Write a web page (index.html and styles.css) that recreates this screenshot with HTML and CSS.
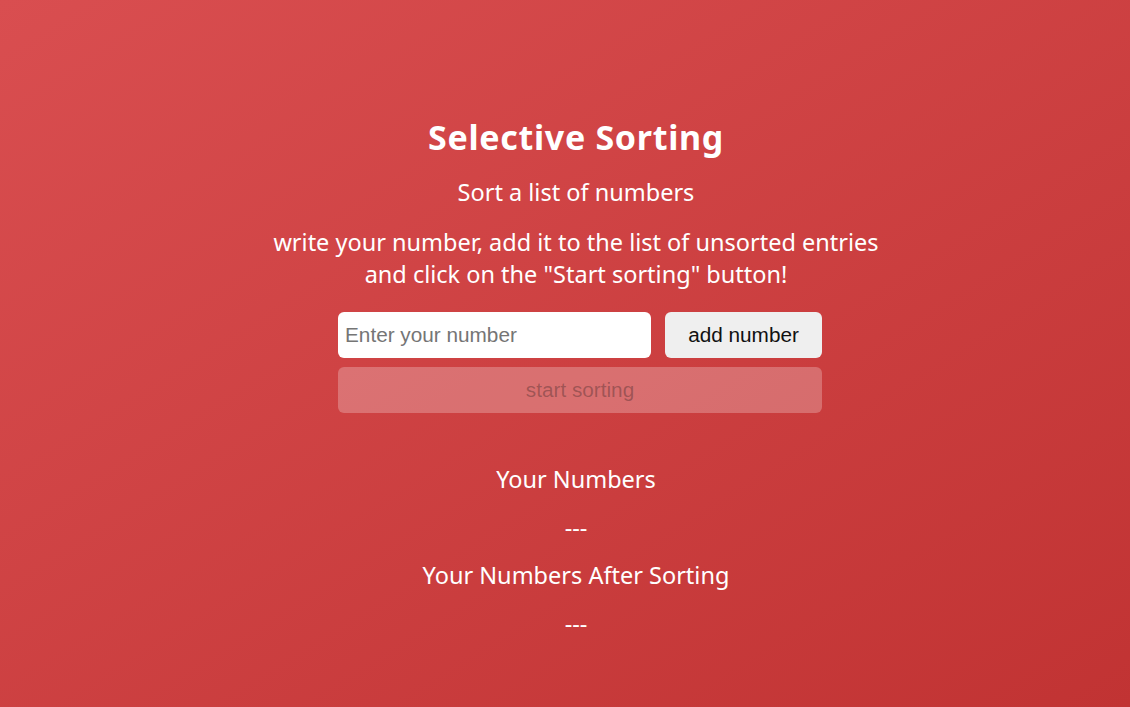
FILE: index.html
```html
<!DOCTYPE html>
<html lang="en">
<head>
<meta charset="utf-8">
<title>Selective Sorting</title>
<link rel="stylesheet" href="styles.css">
</head>
<body>
<main class="app">
  <h1 class="title">Selective Sorting</h1>
  <p class="subtitle">Sort a list of numbers</p>
  <p class="hint">write your number, add it to the list of unsorted entries<br>and click on the "Start sorting" button!</p>
  <div class="controls">
    <div class="row">
      <input class="num-input" type="text" placeholder="Enter your number">
      <button class="btn add-btn">add number</button>
    </div>
    <button class="btn start-btn" disabled>start sorting</button>
  </div>
  <section class="lists">
    <h2 class="list-title">Your Numbers</h2>
    <p class="list-value">---</p>
    <h2 class="list-title">Your Numbers After Sorting</h2>
    <p class="list-value">---</p>
  </section>
</main>
</body>
</html>
```
FILE: styles.css
```css
html, body {
  margin: 0;
  height: 100%;
}
body {
  background: linear-gradient(to bottom right, #d94e50, #c13333);
  font-family: "Noto Sans", "Open Sans", sans-serif;
  color: #fff;
}
.app {
  display: flex;
  flex-direction: column;
  align-items: center;
  padding: 110px 0 0 22px;
  text-align: center;
}
.title {
  margin: 0;
  font-size: 34px;
  letter-spacing: 0.7px;
  font-weight: 700;
  line-height: 54px;
}
.subtitle {
  margin: 0;
  font-size: 23.5px;
  line-height: 32px;
  margin-top: 12px;
}
.hint {
  margin: 18px 0 0;
  font-size: 23.5px;
  line-height: 32px;
}
.controls {
  margin: 22px 0 0 8px;
  display: flex;
  flex-direction: column;
  gap: 9px;
  width: 484px;
}
.row {
  display: flex;
  gap: 14px;
}
.num-input {
  flex: 1;
  height: 46px;
  box-sizing: border-box;
  border: none;
  border-radius: 6px;
  padding: 0 7px;
  font-family: "Liberation Sans", Arial, sans-serif;
  font-size: 20.75px;
  color: #222;
  background: #fff;
  outline: none;
}
.num-input::placeholder {
  color: #757575;
}
.btn {
  height: 46px;
  border: none;
  border-radius: 6px;
  font-family: "Liberation Sans", Arial, sans-serif;
  font-size: 20.75px;
}
.add-btn {
  width: 157px;
  background: #efefef;
  color: #111;
}
.start-btn {
  width: 100%;
  background: rgba(255, 255, 255, 0.25);
  color: rgba(16, 16, 16, 0.3);
}
.lists {
  margin-top: 42px;
  display: flex;
  flex-direction: column;
  align-items: center;
}
.list-title {
  margin: 0;
  font-size: 23.5px;
  font-weight: 400;
  line-height: 48px;
}
.list-value {
  margin: 0;
  font-size: 23.5px;
  line-height: 48px;
}
```
